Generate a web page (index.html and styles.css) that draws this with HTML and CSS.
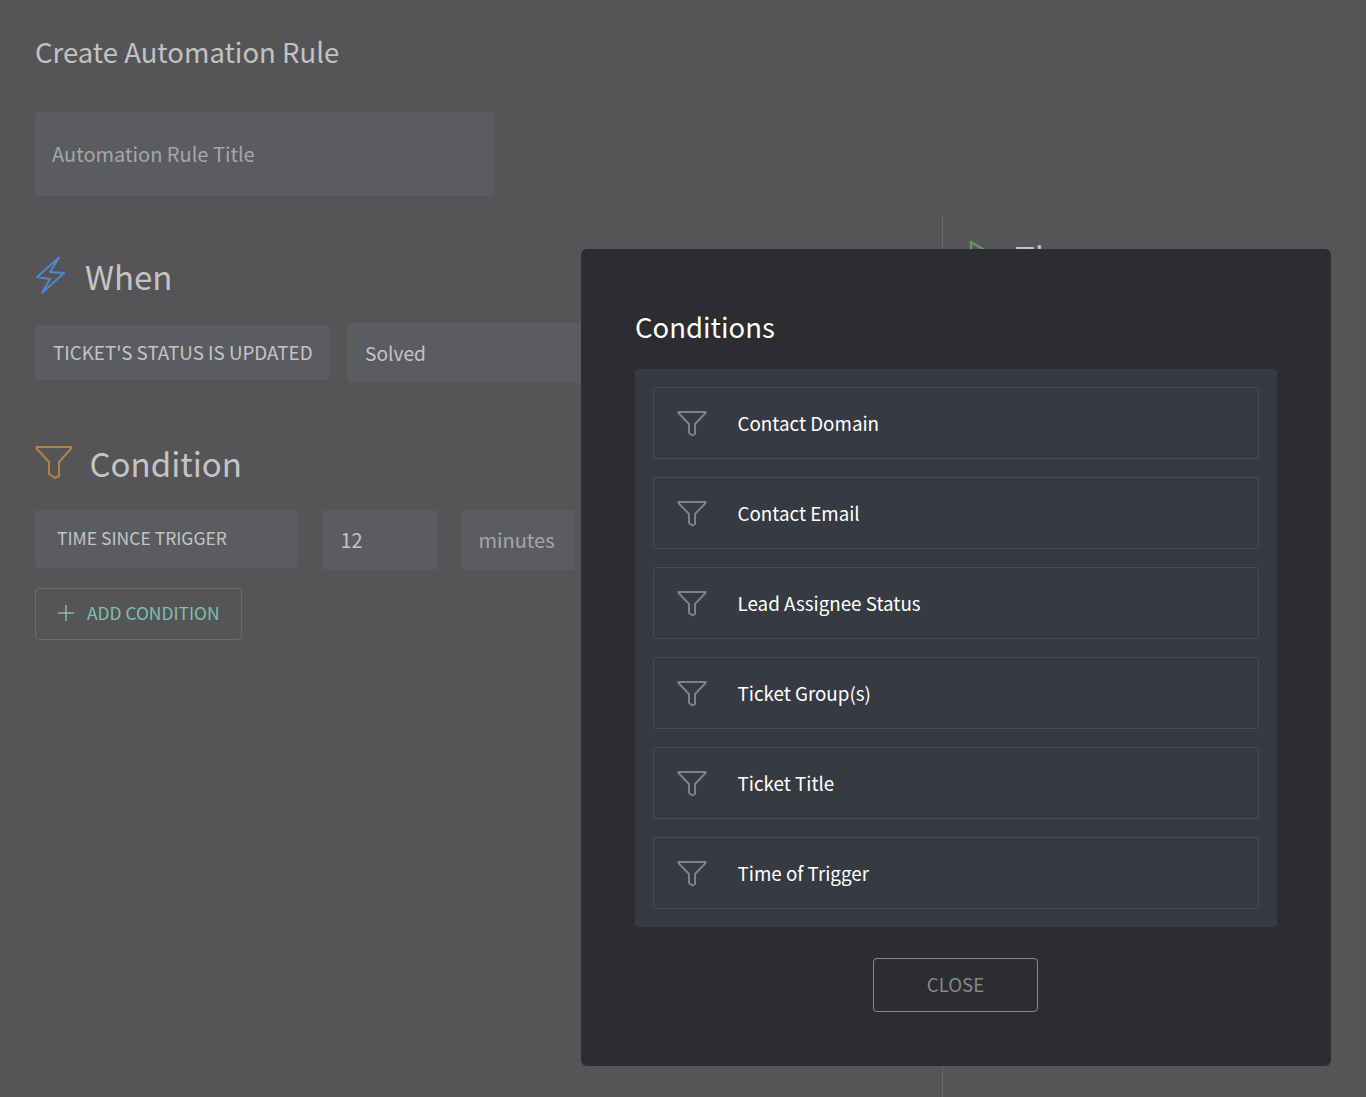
FILE: index.html
```html
<!DOCTYPE html>
<html>

<head>
    <title>Create Automation Rule</title>
    <meta charset="UTF-8">
    <link rel="stylesheet" href="styles.css">
</head>

<body>
    <div class="page">
        <h1 class="page-title">Create Automation Rule</h1>
        <div class="box title-input">Automation Rule Title</div>

        <div class="columns">
            <div class="col-left">
                <div class="section-head when-head">
                    <svg class="when-icon" width="32" height="40" viewBox="0 0 32 40" fill="none" stroke="#4a8ac9" stroke-width="2" stroke-linejoin="round">
                        <path d="M24 2.500 L2 22 L15 24 L7 38 L29 18 L15 17 Z" />
                    </svg>
                    <span class="section-title">When</span>
                </div>
                <div class="row when-row">
                    <div class="box tag-status">TICKET'S STATUS IS UPDATED</div>
                    <div class="box solved">Solved</div>
                </div>

                <div class="section-head cond-head">
                    <svg class="cond-icon" width="38" height="38" viewBox="0 0 38 38" fill="none" stroke="#b9823a" stroke-width="2" stroke-linejoin="round">
                        <path d="M1.500 1 H36 V2.500 L24 16 V30 L20 32 L14 28 V16 L1.500 2.500 Z" />
                    </svg>
                    <span class="section-title">Condition</span>
                </div>
                <div class="row cond-row">
                    <div class="box tag-time">TIME SINCE TRIGGER</div>
                    <div class="box num">12</div>
                    <div class="box unit">minutes</div>
                </div>
                <div class="add-btn">
                    <svg width="18" height="18" viewBox="0 0 18 18" stroke="#7ec29b" stroke-width="1.500">
                        <path d="M9 1 V17 M1 9 H17" />
                    </svg>
                    <span>ADD CONDITION</span>
                </div>
            </div>

            <div class="col-right">
                <svg class="then-icon" width="34" height="40" viewBox="0 0 34 40" fill="none" stroke="#5a9e5f" stroke-width="2.500" stroke-linejoin="round">
                    <path d="M2 3 L30 20 L2 37 Z" />
                </svg>
                <span class="section-title">Then</span>
            </div>
        </div>
    </div>

    <div class="modal">
        <h2 class="modal-title">Conditions</h2>
        <div class="modal-list">
            <div class="modal-item">
                <svg class="filter" width="30" height="28" viewBox="0 0 30 28" fill="none" stroke="#808183" stroke-width="2" stroke-linejoin="round">
                    <path d="M1.500 3 H28.500 V4 L18 15 V25 L15.500 26.500 L12 24 V15 L1.500 4 Z" />
                </svg>
                <span>Contact Domain</span>
            </div>
            <div class="modal-item">
                <svg class="filter" width="30" height="28" viewBox="0 0 30 28" fill="none" stroke="#808183" stroke-width="2" stroke-linejoin="round">
                    <path d="M1.500 3 H28.500 V4 L18 15 V25 L15.500 26.500 L12 24 V15 L1.500 4 Z" />
                </svg>
                <span>Contact Email</span>
            </div>
            <div class="modal-item">
                <svg class="filter" width="30" height="28" viewBox="0 0 30 28" fill="none" stroke="#808183" stroke-width="2" stroke-linejoin="round">
                    <path d="M1.500 3 H28.500 V4 L18 15 V25 L15.500 26.500 L12 24 V15 L1.500 4 Z" />
                </svg>
                <span>Lead Assignee Status</span>
            </div>
            <div class="modal-item">
                <svg class="filter" width="30" height="28" viewBox="0 0 30 28" fill="none" stroke="#808183" stroke-width="2" stroke-linejoin="round">
                    <path d="M1.500 3 H28.500 V4 L18 15 V25 L15.500 26.500 L12 24 V15 L1.500 4 Z" />
                </svg>
                <span>Ticket Group(s)</span>
            </div>
            <div class="modal-item">
                <svg class="filter" width="30" height="28" viewBox="0 0 30 28" fill="none" stroke="#808183" stroke-width="2" stroke-linejoin="round">
                    <path d="M1.500 3 H28.500 V4 L18 15 V25 L15.500 26.500 L12 24 V15 L1.500 4 Z" />
                </svg>
                <span>Ticket Title</span>
            </div>
            <div class="modal-item">
                <svg class="filter" width="30" height="28" viewBox="0 0 30 28" fill="none" stroke="#808183" stroke-width="2" stroke-linejoin="round">
                    <path d="M1.500 3 H28.500 V4 L18 15 V25 L15.500 26.500 L12 24 V15 L1.500 4 Z" />
                </svg>
                <span>Time of Trigger</span>
            </div>
        </div>
        <div class="close-btn">CLOSE</div>
    </div>
</body>

</html>
```

FILE: styles.css
```css
* {
    box-sizing: border-box;
    margin: 0;
    padding: 0;
}

html,
body {
    height: 100%;
    overflow: hidden;
}

body {
    position: relative;
    font-family: "Noto Sans CJK JP", "Noto Sans", sans-serif;
    background: #555557;
    color: #c4c4c5;
}

.page {
    height: 100%;
    padding: 33px 0 0 35px;
}

.page-title {
    font-size: 27.5px;
    font-weight: 400;
    line-height: 36px;
    color: #c2c2c3;
}

.box {
    display: flex;
    align-items: center;
    background: #5b5c60;
    border-radius: 4px;
    white-space: nowrap;
}

.title-input {
    width: 460px;
    height: 84px;
    margin-top: 43px;
    padding: 0 0 2px 17px;
    font-size: 20px;
    color: #a5a6a8;
}

.columns {
    display: flex;
    margin-top: 18px;
    height: 900px;
}

.col-left {
    width: 907px;
    padding-top: 38px;
}

.col-right {
    display: flex;
    align-items: flex-start;
    gap: 12px;
    flex: 1;
    padding: 20px 0 0 26px;
    border-left: 1px solid #68686a;
}

.then-icon {
    margin-top: 5px;
}

.section-head {
    display: flex;
    align-items: center;
    height: 46px;
}

.section-title {
    font-size: 33px;
    line-height: 46px;
    color: #c4c4c5;
}

.when-head {
    gap: 18px;
}

.when-head .section-title {
    margin-top: 2px;
}

.cond-head {
    gap: 16.500px;
    margin-top: 59px;
}

.cond-head .section-title {
    margin-bottom: 4px;
}

.row {
    display: flex;
    align-items: flex-start;
}

.when-row {
    margin-top: 25px;
    gap: 17px;
}

.tag-status {
    width: 295px;
    height: 55px;
    margin-top: 2px;
    padding: 0 0 2px 18px;
    font-size: 18.800px;
    color: #c4c4c5;
}

.solved {
    width: 400px;
    height: 60px;
    padding-left: 18px;
    font-size: 19.200px;
    color: #c4c4c5;
}

.cond-row {
    margin-top: 22px;
    gap: 24px;
}

.tag-time {
    width: 263px;
    height: 58px;
    margin-right: 1px;
    padding: 0 0 3px 22px;
    font-size: 17.500px;
    color: #c4c4c5;
}

.num,
.unit {
    width: 114px;
    height: 60px;
    padding: 0 0 2px 17.500px;
    font-size: 20px;
}

.num {
    color: #c4c4c5;
}

.unit {
    color: #a5a6a8;
}

.add-btn {
    display: flex;
    align-items: center;
    gap: 12px;
    width: 207px;
    height: 52px;
    margin-top: 18px;
    padding: 0 0 2px 21px;
    border: 1px solid #6b6b6d;
    border-radius: 4px;
    font-size: 17.400px;
    color: #7cc0ae;
}

.add-btn span {
    margin-bottom: 1px;
}

.modal {
    position: absolute;
    left: 581px;
    top: 249px;
    width: 750px;
    height: 817px;
    padding: 55px 54px 0;
    background: #2c2d30;
    border-radius: 6px;
}

.modal-title {
    font-size: 27.500px;
    font-weight: 400;
    line-height: 44px;
    color: #fff;
}

.modal-list {
    display: flex;
    flex-direction: column;
    gap: 18px;
    margin-top: 21px;
    padding: 18px;
    background: #373a42;
    border-radius: 4px;
}

.modal-item {
    display: flex;
    align-items: center;
    gap: 30.500px;
    height: 72px;
    padding-left: 23px;
    border: 1px solid #4b4d52;
    border-radius: 4px;
    font-size: 18.800px;
    color: #fff;
}

.modal-item span {
    margin-bottom: 2px;
}

.close-btn {
    display: flex;
    align-items: center;
    justify-content: center;
    width: 165px;
    height: 54px;
    margin: 31px 0 0 238px;
    padding-bottom: 3px;
    border: 1px solid #87888a;
    border-radius: 4px;
    font-size: 18.700px;
    color: #87888a;
}
```
